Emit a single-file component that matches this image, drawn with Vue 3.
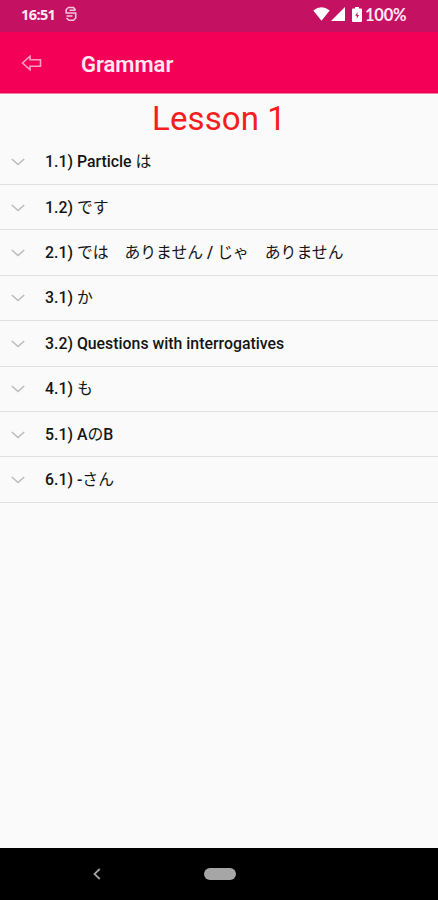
<script setup>
import { ref } from "vue";

const title = ref("Lesson 1");

// kana parts use a lighter weight than the latin ones
const topics = ref([
  { number: "1.1)", name: "Particle は" },
  { number: "1.2)", name: "です" },
  { number: "2.1)", name: "では　ありません / じゃ　ありません" },
  { number: "3.1)", name: "か" },
  { number: "3.2)", name: "Questions with interrogatives" },
  { number: "4.1)", name: "も" },
  { number: "5.1)", name: "AのB" },
  { number: "6.1)", name: "-さん" },
]);

const splitKana = (text) => text.split(/([\u3000-\u30ff]+)/).filter(Boolean);
const isKana = (text) => /[\u3000-\u30ff]/.test(text);
</script>

<template>
  <div class="screen">
    <div class="status-bar">
      <span class="time">16:51</span>
      <svg class="status-logo" viewBox="0 0 12 16">
        <path d="M10.500 4L8.500 1.500H3.500L1.200 3.500V7H10.700V12L8.500 14.300H4L1.500 12" />
        <path d="M4.500 4.300H10.500M1.500 10H7.500" />
      </svg>
      <svg class="wifi" viewBox="0 0 17 14">
        <path d="M0.3 3.5Q8.5 -2.8 16.7 3.5L8.5 13.8Z" />
      </svg>
      <svg class="signal" viewBox="0 0 14 14">
        <path d="M14 0V14H0Z" />
      </svg>
      <svg class="battery" viewBox="0 0 10 15">
        <path d="M3 0h4v1.600h2q1 0 1 1V14q0 1-1 1H1q-1 0-1-1V2.600q0-1 1-1h2z" />
        <path class="bolt" d="M5.500 5.200L3.200 8.800h1.600v2.600l2.200-3.500h-1.500z" />
      </svg>
      <span class="percent">100%</span>
    </div>

    <header class="app-bar">
      <svg class="back" viewBox="0 0 20 16">
        <path d="M1 8L8.500 1.200V4.700H19V11.300H8.500V14.800Z" />
      </svg>
      <h1>Grammar</h1>
    </header>

    <main>
      <h2>{{ title }}</h2>
      <ul>
        <li v-for="topic in topics" :key="topic.number">
          <svg class="chevron" viewBox="0 0 14 8">
            <path d="M0.800 1L7 6.500L13.200 1" />
          </svg>
          <span class="label">{{ topic.number }} <span
            v-for="(part, index) in splitKana(topic.name)"
            :key="index"
            :class="{ kana: isKana(part) }"
          >{{ part }}</span></span>
        </li>
      </ul>
    </main>

    <footer class="nav-bar">
      <svg class="nav-back" viewBox="0 0 8 12">
        <path d="M6.700 1L1.500 6L6.700 11" />
      </svg>
      <span class="home"></span>
    </footer>
  </div>
</template>

<style>
body {
  background: #fafafa;
}
</style>

<style scoped>
.screen {
  display: flex;
  flex-direction: column;
  width: 438px;
  height: 900px;
  overflow: hidden;
  background: #fafafa;
  font-family: Roboto, "Noto Sans CJK JP", sans-serif;
}

svg {
  flex: none;
  fill: none;
}

.status-bar {
  display: flex;
  align-items: center;
  box-sizing: border-box;
  height: 32px;
  padding: 0 31px 4px 21px;
  background: #c51162;
  color: #ffeaf3;
}

.time {
  width: 35px;
  font-family: "Open Sans", sans-serif;
  font-size: 14.5px;
  font-weight: 700;
  letter-spacing: -0.6px;
}

.status-logo {
  width: 12px;
  height: 16px;
  margin-left: 9px;
  stroke: #f6c5da;
  stroke-width: 1.6;
}

.wifi {
  width: 17px;
  height: 14px;
  margin-left: auto;
  fill: #fff;
}

.signal {
  width: 14px;
  height: 14px;
  margin-left: 1px;
  fill: #fff;
}

.battery {
  width: 10px;
  height: 15px;
  margin-left: 7px;
  fill: #fff;
}

.bolt {
  fill: #c51162;
}

.percent {
  width: 42px;
  margin: 1px 0 0 3px;
  font-family: Lato, sans-serif;
  font-size: 16.5px;
  font-weight: 700;
  line-height: 16px;
  letter-spacing: -0.2px;
  white-space: nowrap;
}

.app-bar {
  display: flex;
  align-items: center;
  box-sizing: border-box;
  height: 62px;
  padding-left: 21px;
  border-bottom: 1px solid #f77ea6;
  background: #f50057;
}

.back {
  width: 21px;
  height: 16px;
  margin-top: 1px;
  stroke: #ff9fc0;
  stroke-width: 1.6;
}

h1 {
  margin: 4px 0 0 39px;
  color: #ffeaf1;
  font-size: 22px;
  font-weight: 600;
}

main {
  flex: 1;
}

h2 {
  height: 45.6px;
  margin: 0;
  color: #f51d1d;
  font-size: 33px;
  font-weight: 400;
  line-height: 49px;
  letter-spacing: 0.1px;
  text-align: center;
}

ul {
  margin: 0;
  padding: 0;
  list-style: none;
}

li {
  display: flex;
  align-items: center;
  box-sizing: border-box;
  height: 45.4px;
  padding: 1px 0 0 11px;
  border-bottom: 1px solid #e0e0e0;
}

.chevron {
  width: 14px;
  height: 8px;
  stroke: #bcbcbc;
  stroke-width: 1.6;
}

.label {
  margin-left: 20px;
  color: #151515;
  font-size: 15.85px;
  font-weight: 500;
  line-height: 20px;
  white-space: nowrap;
}

.kana {
  font-weight: 400;
}

.nav-bar {
  display: flex;
  align-items: center;
  height: 52px;
  padding-left: 93px;
  background: #000;
}

.nav-back {
  width: 8px;
  height: 12px;
  stroke: #a0a0a0;
  stroke-width: 1.8;
}

.home {
  width: 32px;
  height: 12px;
  margin-left: 103px;
  border-radius: 6px;
  background: #a6a6a6;
}
</style>
